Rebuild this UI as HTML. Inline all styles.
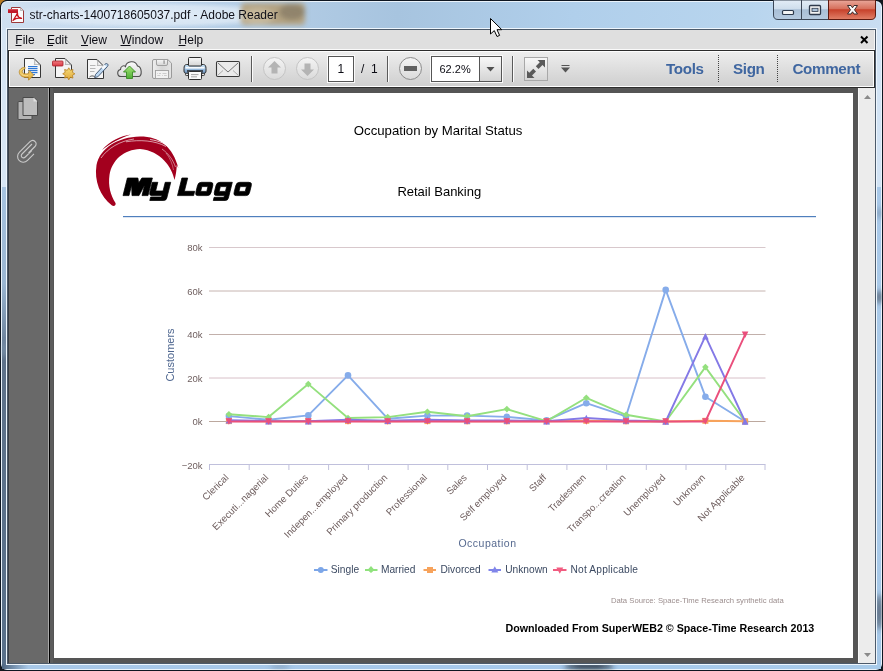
<!DOCTYPE html>
<html><head><meta charset="utf-8">
<style>
html,body{margin:0;padding:0;width:883px;height:671px;overflow:hidden;background:#b9d2ea;}
svg{display:block;position:absolute;left:0;top:0;}
text{font-family:"Liberation Sans",sans-serif;}
</style></head>
<body>
<svg width="883" height="671" viewBox="0 0 883 671">
<defs>
  <linearGradient id="glassH" x1="0" y1="0" x2="1" y2="0">
    <stop offset="0" stop-color="#cfe0f1"/>
    <stop offset="0.2" stop-color="#bcd3ea"/>
    <stop offset="0.45" stop-color="#a7c4df"/>
    <stop offset="0.65" stop-color="#b0cfeb"/>
    <stop offset="0.85" stop-color="#b8d5ee"/>
    <stop offset="1" stop-color="#c9ddf1"/>
  </linearGradient>
  <linearGradient id="frameL" x1="0" y1="0" x2="0" y2="1">
    <stop offset="0" stop-color="#a6c3e0"/>
    <stop offset="0.2" stop-color="#9ab6d2"/>
    <stop offset="0.36" stop-color="#5e728a"/>
    <stop offset="1" stop-color="#58708a"/>
  </linearGradient>
  <linearGradient id="frameR" x1="0" y1="0" x2="0" y2="1">
    <stop offset="0" stop-color="#a8c8e8"/>
    <stop offset="0.6" stop-color="#acccea"/>
    <stop offset="1" stop-color="#a4c6e6"/>
  </linearGradient>
  <linearGradient id="frameB" x1="0" y1="0" x2="1" y2="0">
    <stop offset="0" stop-color="#4d6580"/>
    <stop offset="0.03" stop-color="#a8c8e8"/>
    <stop offset="0.5" stop-color="#a6c8ea"/>
    <stop offset="1" stop-color="#a8cbea"/>
  </linearGradient>
  <linearGradient id="tb" x1="0" y1="0" x2="0" y2="1">
    <stop offset="0" stop-color="#ededed"/>
    <stop offset="1" stop-color="#cfcfcf"/>
  </linearGradient>
  <linearGradient id="btnBlue" x1="0" y1="0" x2="0" y2="1">
    <stop offset="0" stop-color="#e3edf7"/>
    <stop offset="0.45" stop-color="#cfdeec"/>
    <stop offset="0.5" stop-color="#a9bfd6"/>
    <stop offset="1" stop-color="#b6cadf"/>
  </linearGradient>
  <linearGradient id="btnRed" x1="0" y1="0" x2="0" y2="1">
    <stop offset="0" stop-color="#eaa99c"/>
    <stop offset="0.45" stop-color="#d6705c"/>
    <stop offset="0.5" stop-color="#c7412b"/>
    <stop offset="1" stop-color="#e2826a"/>
  </linearGradient>
  <radialGradient id="glow" cx="0.5" cy="0.5" r="0.5">
    <stop offset="0" stop-color="#e4eef8" stop-opacity="0.95"/>
    <stop offset="0.7" stop-color="#dde9f5" stop-opacity="0.8"/>
    <stop offset="1" stop-color="#dde9f5" stop-opacity="0"/>
  </radialGradient>
  <radialGradient id="blob" cx="0.5" cy="0.5" r="0.5">
    <stop offset="0" stop-color="#6f6a60" stop-opacity="0.9"/>
    <stop offset="0.35" stop-color="#9a8566" stop-opacity="0.85"/>
    <stop offset="0.75" stop-color="#b39f7c" stop-opacity="0.6"/>
    <stop offset="1" stop-color="#b39f7c" stop-opacity="0"/>
  </radialGradient>
  <linearGradient id="arrowY" x1="0" y1="0" x2="0" y2="1">
    <stop offset="0" stop-color="#f6dc7a"/>
    <stop offset="1" stop-color="#e0a83a"/>
  </linearGradient>
  <filter id="blur3" x="-50%" y="-50%" width="200%" height="200%"><feGaussianBlur stdDeviation="2.5"/></filter>
  <linearGradient id="redBar" x1="0" y1="0" x2="0" y2="1">
    <stop offset="0" stop-color="#f07a80"/>
    <stop offset="1" stop-color="#d83a44"/>
  </linearGradient>
  <linearGradient id="prnBlue" x1="0" y1="0" x2="0" y2="1">
    <stop offset="0" stop-color="#c4e0f4"/>
    <stop offset="0.6" stop-color="#94b8dc"/>
    <stop offset="1" stop-color="#6c90b8"/>
  </linearGradient>
  <linearGradient id="saveG" x1="0" y1="0" x2="1" y2="0">
    <stop offset="0" stop-color="#eeeeee"/>
    <stop offset="0.5" stop-color="#d6d6d6"/>
    <stop offset="1" stop-color="#e4e4e4"/>
  </linearGradient>
  <linearGradient id="cloudG" x1="0" y1="0" x2="0" y2="1">
    <stop offset="0" stop-color="#fbfbfb"/>
    <stop offset="1" stop-color="#d8d8d8"/>
  </linearGradient>
  <linearGradient id="greenG" x1="0" y1="0" x2="0" y2="1">
    <stop offset="0" stop-color="#a6e67a"/>
    <stop offset="1" stop-color="#4fae34"/>
  </linearGradient>
  <linearGradient id="btnGrad" x1="0" y1="0" x2="0" y2="1">
    <stop offset="0" stop-color="#f8f8f8"/>
    <stop offset="1" stop-color="#d4d4d4"/>
  </linearGradient>
  <linearGradient id="circGrad" x1="0" y1="0" x2="0" y2="1">
    <stop offset="0" stop-color="#f4f4f4"/>
    <stop offset="1" stop-color="#dadada"/>
  </linearGradient>
</defs>

<!-- ===== Window frame ===== -->
<rect x="0" y="0" width="883" height="671" fill="#14181e"/>
<path d="M0 0 H6 C4 1 2 3 0 6 Z" fill="#b87a22"/>
<rect x="0" y="0" width="883" height="671" rx="7" fill="#0e1621"/>
<rect x="1" y="1" width="881" height="669" rx="6" fill="#eaf3fb"/>
<rect x="2" y="2" width="879" height="667" rx="5" fill="url(#glassH)"/>
<rect x="2" y="30" width="5" height="157" fill="#d6e5f4"/>
<rect x="876" y="30" width="5" height="157" fill="#d2e3f4"/>
<rect x="2" y="187" width="5" height="482" fill="url(#frameL)"/>
<rect x="876" y="187" width="5" height="482" fill="url(#frameR)"/>
<rect x="2" y="664" width="879" height="5" fill="url(#frameB)"/>
<g filter="url(#blur3)">
  <ellipse cx="879" cy="213" rx="2" ry="6" fill="#6f88a2" opacity="0.8"/>
  <ellipse cx="879" cy="297" rx="2.2" ry="7" fill="#3c4654" opacity="0.9"/>
  <ellipse cx="879" cy="612" rx="2.2" ry="18" fill="#343c48" opacity="0.9"/>
  <ellipse cx="4" cy="350" rx="2" ry="8" fill="#8ea6c0" opacity="0.6"/>
  <ellipse cx="589" cy="666.5" rx="25" ry="2.6" fill="#1e2630" opacity="1"/>
  <ellipse cx="280" cy="666.5" rx="10" ry="1.8" fill="#6a8098" opacity="0.6"/>
</g>
<rect x="6" y="28" width="871" height="637" fill="#eef6fd"/>
<rect x="7" y="29" width="869" height="635" fill="#4c5a6a"/>
<!-- title glow -->
<ellipse cx="150" cy="15" rx="155" ry="13" fill="url(#glow)"/>
<g filter="url(#blur3)">
  <rect x="241" y="3" width="64" height="22" rx="4" fill="#b3a07c" opacity="0.95"/>
  <ellipse cx="292" cy="12" rx="13" ry="8" fill="#6e6656" opacity="0.5"/>
  <ellipse cx="258" cy="16" rx="16" ry="8" fill="#e8e0cc" opacity="0.35"/>
</g>
<!-- PDF icon -->
<g>
  <path d="M11.5 7.5 H20.5 L23.5 10.5 V22.5 H11.5 Z" fill="#fbfbfb" stroke="#9c3a3a" stroke-width="1"/>
  <path d="M20.5 7.5 V10.5 H23.5" fill="#ddd" stroke="#9c9c9c" stroke-width="0.6"/>
  <rect x="8" y="9" width="10" height="4" fill="#c11a2a"/>
  <rect x="8" y="9" width="10" height="1.2" fill="#d84a55"/>
  <path d="M13 20.5 C14.5 18 16.5 15.5 17.5 13 C17.2 15 17.8 16.5 19 17.3 C20 17.8 21 18 21.5 18.3 C19.5 18.2 17.5 18 15.5 18.6 C14.5 19.3 13.8 20 13 20.5 Z" fill="none" stroke="#c8141e" stroke-width="1.3" stroke-linejoin="round"/>
</g>
<text x="29.5" y="19.3" font-size="12" fill="#101018">str-charts-1400718605037.pdf - Adobe Reader</text>

<!-- Window buttons -->
<path d="M773.5 0 V15 Q773.5 19.5 778 19.5 H801.5 V0 Z" fill="url(#btnBlue)" stroke="#3b4656" stroke-width="1"/>
<rect x="801.5" y="0" width="27" height="19.5" fill="url(#btnBlue)" stroke="#3b4656" stroke-width="1"/>
<path d="M828.5 0 V19.5 H871 Q875.5 19.5 875.5 15 V0 Z" fill="url(#btnRed)" stroke="#5e1a10" stroke-width="1"/>
<rect x="782.5" y="10.5" width="11" height="4" rx="1" fill="#f4f4f4" stroke="#2e3a4c" stroke-width="1.2"/>
<rect x="809.5" y="5.5" width="11" height="9" rx="1" fill="#f4f4f4" stroke="#2e3a4c" stroke-width="1.3"/>
<rect x="812" y="8.3" width="6" height="3.2" fill="#a9c0d8" stroke="#2e3a4c" stroke-width="0.8"/>
<path d="M847.5 5.5 H851 L852.5 7.8 L854 5.5 H857.5 L854.5 9.8 L857.5 14 H854 L852.5 11.8 L851 14 H847.5 L850.5 9.8 Z" fill="#fafafa" stroke="#3b2a2a" stroke-width="1" stroke-linejoin="round"/>

<!-- ===== Client area ===== -->
<!-- menubar -->
<rect x="8" y="30" width="867" height="19" fill="#dfdfdf"/>
<rect x="8" y="49" width="866" height="1" fill="#fafafa"/>
<rect x="874" y="30" width="1" height="20" fill="#f4f4f4"/>
<g font-size="12" fill="#0c0c14">
  <text x="15.3" y="44">File</text>
  <text x="46.9" y="44">Edit</text>
  <text x="81.1" y="44">View</text>
  <text x="120.4" y="44">Window</text>
  <text x="178.6" y="44">Help</text>
</g>
<g fill="#0c0c14">
  <rect x="15.5" y="45" width="6" height="1"/>
  <rect x="47" y="45" width="6" height="1"/>
  <rect x="81" y="45" width="7" height="1"/>
  <rect x="120.5" y="45" width="10" height="1"/>
  <rect x="178.5" y="45" width="7" height="1"/>
</g>
<path d="M861 36.5 L867.5 43 M867.5 36.5 L861 43" stroke="#000" stroke-width="2"/>

<!-- toolbar -->
<rect x="8" y="50" width="867" height="38" fill="#2c2c2c"/>
<rect x="9" y="51" width="865" height="36" fill="#fdfdfd"/>
<rect x="10" y="52" width="863" height="34" fill="url(#tb)"/>
<!-- toolbar icons -->
<!-- open -->
<g>
  <path d="M24.5 58.5 H34 L40.5 65 V77.5 H24.5 Z" fill="#f8f8f8" stroke="#363636" stroke-width="1"/>
  <path d="M34 58.8 C35 61 35 63 34.3 64.5 C36.5 64 38.5 64.5 40.2 65.2" fill="none" stroke="#9a9a9a" stroke-width="0.8"/>
  <g fill="#2f78d6"><rect x="28" y="66" width="9.5" height="1.2"/><rect x="28" y="68" width="9.5" height="1.2"/><rect x="28" y="70" width="9.5" height="1.2"/><rect x="28" y="72" width="9.5" height="1.2"/><rect x="31" y="74" width="4" height="1.2"/></g>
  <path d="M25 67.3 C20.3 67.6 18.6 70.8 19.5 73.5 C20.6 76.8 24.5 77.8 28.3 77.3 L28.6 80.2 L33.6 75 L29 70.2 L28.7 73.6 C26.2 74.2 23.2 73.9 22.4 72.4 C21.7 70.9 22.8 69.2 25 68.7 Z" fill="url(#arrowY)" stroke="#b8862a" stroke-width="0.8" stroke-linejoin="round"/>
  <path d="M21 73.5 C22 75.5 25 76 28 75.6" fill="none" stroke="#fff3c0" stroke-width="0.7" opacity="0.8"/>
</g>
<!-- create pdf -->
<g>
  <path d="M55.5 58.5 H65 L71.5 65 V77.5 H55.5 Z" fill="#f5f5f5" stroke="#363636" stroke-width="1"/>
  <path d="M65 58.8 C66 61 66 63 65.3 64.5 C67.5 64 69.5 64.5 71.2 65.2" fill="none" stroke="#9a9a9a" stroke-width="0.8"/>
  <rect x="52.5" y="61" width="10.5" height="5" rx="0.8" fill="url(#redBar)" stroke="#a8202a" stroke-width="0.8"/>
  <path d="M68.8 67.8 L70.3 70.3 L73 69.5 L72.4 72.3 L74.9 73.8 L72.4 75.3 L73 78.1 L70.3 77.3 L68.8 79.8 L67.3 77.3 L64.6 78.1 L65.2 75.3 L62.7 73.8 L65.2 72.3 L64.6 69.5 L67.3 70.3 Z" fill="url(#arrowY)" stroke="#b88020" stroke-width="0.8" stroke-linejoin="round"/>
</g>
<!-- sign -->
<g>
  <path d="M87.5 59.5 H97 L103.5 66 V78.5 H87.5 Z" fill="#f6f6f6" stroke="#363636" stroke-width="1"/>
  <path d="M97 59.8 C98 62 98 64 97.3 65.5 C99.5 65 101.5 65.5 103.2 66.2" fill="none" stroke="#9a9a9a" stroke-width="0.8"/>
  <g fill="#b0b0b0"><rect x="90" y="65" width="5.5" height="0.9"/><rect x="90" y="68" width="5.5" height="0.9"/><rect x="90" y="71" width="4.5" height="0.9"/></g>
  <path d="M95.5 74.5 L105 64.2 C105.8 63.4 107 63.4 107.6 64 C108.2 64.6 108.2 65.8 107.4 66.6 L97.8 76.8 L94.6 77.6 Z" fill="#bcd8f2" stroke="#3a4e6a" stroke-width="0.9" stroke-linejoin="round"/>
  <path d="M101.2 67.2 L104.2 64.4 L106.3 66.5 L103.3 69.5 Z" fill="#ffffff" opacity="0.9"/>
  <path d="M89.5 77 C91 75.8 92.5 75.5 94.5 76.5" stroke="#333" stroke-width="0.8" fill="none"/>
</g>
<!-- cloud -->
<g>
  <path d="M121 76.5 C117 76.5 116.5 70.5 120.5 69.5 C120.5 66 124 65 125.5 66.5 C126.5 61 135.5 59.5 137.5 66 C142 66.5 142.5 76.5 138.5 76.5 Z" fill="url(#cloudG)" stroke="#4e4e4e" stroke-width="1.1"/>
  <path d="M129.5 66 L135.5 72 H132.5 V78.5 H126.5 V72 H123.5 Z" fill="url(#greenG)" stroke="#3b8a26" stroke-width="0.9" stroke-linejoin="round"/>
</g>
<!-- save (disabled) -->
<g>
  <path d="M154 59.5 H167.8 L171.5 63.2 V77 Q171.5 78.5 170 78.5 H154 Q152.5 78.5 152.5 77 V61 Q152.5 59.5 154 59.5 Z" fill="url(#saveG)" stroke="#9a9a9a" stroke-width="1"/>
  <path d="M156.5 59.5 H167.5 V64 Q167.5 65.5 166 65.5 H158 Q156.5 65.5 156.5 64 Z" fill="url(#btnGrad)" stroke="#9a9a9a" stroke-width="0.9"/>
  <rect x="163.3" y="60.3" width="1.6" height="3.6" fill="#a6a6a6"/>
  <rect x="155.5" y="70.5" width="13" height="8" fill="#f2f2f2" stroke="#a0a0a0" stroke-width="0.9"/>
  <g fill="#c4c4c4"><rect x="157.3" y="73" width="0.8" height="0.8"/><rect x="159" y="73" width="2" height="0.8"/><rect x="162.5" y="73" width="4" height="0.8"/><rect x="157.3" y="75.2" width="3" height="0.8"/><rect x="162" y="75.2" width="0.8" height="0.8"/><rect x="164" y="75.2" width="2.8" height="0.8"/></g>
</g>
<!-- print -->
<g>
  <rect x="185.5" y="72.5" width="4" height="3" rx="0.8" fill="#e6e6e6" stroke="#2e2e2e" stroke-width="0.9"/>
  <rect x="200.5" y="72.5" width="4" height="3" rx="0.8" fill="#e6e6e6" stroke="#2e2e2e" stroke-width="0.9"/>
  <path d="M186.5 64.5 H203.5 C205.3 64.5 206 66.3 206 68.5 V71 C206 72.6 205.2 73.3 203.8 73.3 H186.2 C184.8 73.3 184 72.6 184 71 V68.5 C184 66.3 184.7 64.5 186.5 64.5 Z" fill="url(#prnBlue)" stroke="#2e2e2e" stroke-width="1"/>
  <rect x="185.5" y="66.8" width="19" height="1.8" fill="#ffffff" opacity="0.9"/>
  <rect x="187" y="70" width="16" height="2.6" fill="#3e4a58"/>
  <rect x="188.5" y="57.5" width="13" height="8.5" rx="1" fill="url(#btnGrad)" stroke="#2e2e2e" stroke-width="1"/>
  <rect x="188.5" y="71.5" width="13" height="8" rx="1" fill="#f9f9f9" stroke="#2e2e2e" stroke-width="1"/>
  <rect x="191" y="74.2" width="7.5" height="0.9" fill="#9a9a9a"/><rect x="191" y="76.4" width="6" height="0.9" fill="#9a9a9a"/>
</g>
<!-- mail -->
<g>
  <rect x="216.5" y="61.5" width="23" height="15" rx="1.2" fill="#ebebeb" stroke="#3a3a3a" stroke-width="1.1"/>
  <path d="M218 63 L228 72 L238 63" fill="none" stroke="#6a6a6a" stroke-width="0.9"/>
  <path d="M218 75 L223 70.5 M238 75 L233 70.5" fill="none" stroke="#9a9a9a" stroke-width="0.8"/>
</g>
<!-- separator -->
<rect x="251" y="56" width="1" height="26" fill="#5a5a5a"/><rect x="252" y="56" width="1" height="26" fill="#fbfbfb"/>
<!-- up / down -->
<circle cx="274.5" cy="68.5" r="11" fill="url(#circGrad)" stroke="#c4c4c4" stroke-width="1"/>
<path d="M274.5 61 L281 67.5 H277.5 V73.5 H271.5 V67.5 H268 Z" fill="#b4b4b4"/>
<circle cx="307.5" cy="68.5" r="11" fill="url(#circGrad)" stroke="#c4c4c4" stroke-width="1"/>
<path d="M307.5 76 L314 69.5 H310.5 V63.5 H304.5 V69.5 H301 Z" fill="#b4b4b4"/>
<!-- page box -->
<rect x="327" y="55" width="28" height="28" fill="#fafafa"/>
<rect x="328.5" y="56.5" width="25" height="25" fill="#fff" stroke="#555" stroke-width="1"/>
<text x="337.5" y="72.5" font-size="12" fill="#0c0c14">1</text>
<text x="361" y="72.5" font-size="12" fill="#0c0c14">/</text><text x="371" y="72.5" font-size="12" fill="#0c0c14">1</text>
<rect x="387" y="56" width="1" height="26" fill="#5a5a5a"/><rect x="388" y="56" width="1" height="26" fill="#fbfbfb"/>
<!-- minus -->
<circle cx="410.5" cy="68.5" r="11" fill="url(#circGrad)" stroke="#8c8c8c" stroke-width="1"/>
<rect x="404" y="66" width="13" height="5" fill="#606060"/>
<!-- zoom box -->
<rect x="430" y="55" width="73" height="28" fill="#fafafa"/>
<rect x="431.5" y="56.5" width="70" height="25" fill="#fff" stroke="#555" stroke-width="1"/>
<rect x="480" y="57" width="21" height="24" fill="url(#btnGrad)"/>
<rect x="479" y="57" width="1" height="24" fill="#555"/>
<text x="439.5" y="72.5" font-size="11" fill="#0c0c14">62.2%</text>
<path d="M486.5 67 H494.5 L490.5 71.5 Z" fill="#505050"/>
<rect x="512" y="56" width="1" height="26" fill="#5a5a5a"/><rect x="513" y="56" width="1" height="26" fill="#fbfbfb"/>
<!-- fullscreen -->
<rect x="524.5" y="57.5" width="23" height="23" fill="url(#btnGrad)" stroke="#a8a8a8" stroke-width="1"/>
<path d="M537.5 60 H545 V67.5 L542.5 65 L538.5 69 L535.8 66.3 L539.8 62.3 Z" fill="#5a5a5a"/>
<path d="M527 70.5 V78 H534.5 L532 75.5 L536 71.5 L533.3 68.8 L529.3 72.8 Z" fill="#5a5a5a"/>
<!-- small dropdown -->
<rect x="561.5" y="65" width="8" height="1" fill="#555"/>
<path d="M561 67.5 H570 L565.5 72.5 Z" fill="#555"/>
<!-- Tools Sign Comment -->
<g font-size="15.2" font-weight="bold" fill="#3f66a0" letter-spacing="-0.35">
  <text x="666" y="74">Tools</text>
  <text x="733" y="74">Sign</text>
  <text x="792.5" y="74">Comment</text>
</g>
<line x1="718.5" y1="55" x2="718.5" y2="82" stroke="#444" stroke-width="1" stroke-dasharray="1 1"/>
<line x1="777.5" y1="55" x2="777.5" y2="82" stroke="#444" stroke-width="1" stroke-dasharray="1 1"/>

<!-- ===== Document area ===== -->
<rect x="8" y="88" width="867" height="575" fill="#555555"/>
<!-- left panel -->
<rect x="8" y="88" width="40" height="575" fill="#696969"/>
<rect x="8" y="88" width="1" height="575" fill="#3a3f46"/>
<rect x="48" y="88" width="1" height="575" fill="#a9a9a9"/>
<rect x="49" y="88" width="1" height="575" fill="#000"/>
<rect x="50" y="88" width="3" height="575" fill="#5c5c5c"/>
<!-- pages icon -->
<rect x="18" y="101.5" width="14" height="18" rx="1" fill="#b4b4b4" stroke="#4a4a4a" stroke-width="1"/>
<path d="M23 97.5 H34 L37.5 101 V115.5 H23 Z" fill="#bdbdbd" stroke="#4a4a4a" stroke-width="1"/>
<path d="M33.5 97.5 V101.5 H37.5 Z" fill="#e0e0e0"/>
<!-- paperclip -->
<path transform="translate(0 1)" d="M28.5 152 L35 145.5 C36.5 144 36.5 141.5 35 140.5 C33.5 139 31.5 139.2 30 140.7 L19.5 151.2 C17 153.7 17 157.5 19.3 159.7 C21.5 161.9 25 161.8 27.5 159.3 L34 152.8 M32 143 L22 153 C21 154 21 155.5 22 156.3 C23 157.2 24.3 157 25.3 156 L32 149.3" fill="none" stroke="#c9c9c9" stroke-width="1.1"/>

<!-- scrollbar -->
<rect x="858" y="88" width="17" height="575" fill="#ececec"/>
<rect x="858" y="88" width="1" height="575" fill="#f8f8f8"/>
<path d="M864 99 H871 L867.5 95 Z" fill="#8a8a8a"/>
<path d="M864 653 H871 L867.5 657 Z" fill="#8a8a8a"/>

<!-- ===== Page ===== -->
<rect x="54" y="93" width="799" height="565" fill="#ffffff"/>

<!-- Logo swoosh -->
<path d="M112 205.5 C100 196 94 181 96.5 165 C100 148 118 137 140 136.5 C160 136.5 173 147 178.5 168.5 L176.8 165 C176.5 171 175.8 175 174.5 180 C172 167 161 151 140 149 C124 149.5 112 160 109.5 175 C108 186 110.5 195 115.5 203 C116.3 205 114.3 206.8 112 205.5 Z" fill="#a3001e"/>
<path d="M102 150 C110 141 120 136 131 134.5 C121 137.5 111 143 102 150 Z" fill="#a3001e"/>
<path d="M101 158 C108 148 120 141 134 139" stroke="#fff" stroke-width="0.7" fill="none" opacity="0.85"/>
<path d="M126 141.8 C140 139.5 155 140.5 166 146.5" stroke="#fff" stroke-width="0.7" fill="none" opacity="0.85"/>
<path d="M150 139.5 C160 141 166 144 170 148" stroke="#fff" stroke-width="0.8" fill="none" opacity="0.9"/>
<path d="M162 149 C169 154 173 160 175.5 167" stroke="#fff" stroke-width="0.6" fill="none" opacity="0.85"/>
<path d="M166 153 C170 158 172.5 164 173.5 170" stroke="#fff" stroke-width="0.5" fill="none" opacity="0.7"/>
<g transform="matrix(1 0 -0.25 1 48.9 0)" fill="#000" fill-rule="evenodd" stroke="#000" stroke-width="0.7" stroke-linejoin="round">
<path d="M123 195.6 L123 178 L133.5 178 L135.5 183 L137.5 178 L148 178 L148 195.6 L142 195.6 L142 185 L139 195.6 L132 195.6 L129 185 L129 195.6 Z"/><path d="M149 182.3 H154.5 V191 H161.9 V182.3 H167.4 V198 Q167.4 200.5 165 200.5 H151 V197 H161.9 V195.6 H152 Q149 195.6 149 192.5 Z"/><path d="M177.5 178 H183.3 V191.3 H193.6 V195.6 H177.5 Z"/><path d="M198.2 182.3 H207.10000000000002 Q210.3 182.3 210.3 185.5 V192.4 Q210.3 195.6 207.10000000000002 195.6 H198.2 Q195 195.6 195 192.4 V185.5 Q195 182.3 198.2 182.3 Z M199.6 186.6 H205.7 V191.4 H199.6 Z"/><path d="M216.7 182.3 H229 V198 Q229 200.5 226.5 200.5 H214.5 V197.3 H224.4 V195.6 H216.7 Q213.5 195.6 213.5 192.4 V185.5 Q213.5 182.3 216.7 182.3 Z M218.1 186.6 H224.4 V191.4 H218.1 Z"/><path d="M236.5 182.3 H245.60000000000002 Q248.8 182.3 248.8 185.5 V192.4 Q248.8 195.6 245.60000000000002 195.6 H236.5 Q233.3 195.6 233.3 192.4 V185.5 Q233.3 182.3 236.5 182.3 Z M237.9 186.6 H244.2 V191.4 H237.9 Z"/>
</g>

<text x="353.8" y="134.5" font-size="13.2" fill="#000">Occupation by Marital Status</text>
<text x="397.4" y="195.7" font-size="13" fill="#000">Retail Banking</text>
<rect x="123" y="216" width="693" height="1.2" fill="#4f7fbd"/>

<!-- ===== Chart ===== -->
<g stroke-width="1" fill="none">
  <line x1="209" y1="247.5" x2="765.5" y2="247.5" stroke="#d8c8cc"/>
  <line x1="209" y1="291" x2="765.5" y2="291" stroke="#c6b4b0"/>
  <line x1="209" y1="334.5" x2="765.5" y2="334.5" stroke="#c2b0ab"/>
  <line x1="209" y1="378" x2="765.5" y2="378" stroke="#d8c0c8"/>
  <line x1="209" y1="421.5" x2="765.5" y2="421.5" stroke="#bca89e"/>
  <line x1="209" y1="464.5" x2="765.5" y2="464.5" stroke="#c0c0dc"/>
</g>
<g stroke="#c0c0dc" stroke-width="1">
  <line x1="209.5" y1="464.5" x2="209.5" y2="470"/>
  <line x1="249.2" y1="464.5" x2="249.2" y2="470"/>
  <line x1="288.9" y1="464.5" x2="288.9" y2="470"/>
  <line x1="328.6" y1="464.5" x2="328.6" y2="470"/>
  <line x1="368.4" y1="464.5" x2="368.4" y2="470"/>
  <line x1="408.1" y1="464.5" x2="408.1" y2="470"/>
  <line x1="447.8" y1="464.5" x2="447.8" y2="470"/>
  <line x1="487.5" y1="464.5" x2="487.5" y2="470"/>
  <line x1="527.2" y1="464.5" x2="527.2" y2="470"/>
  <line x1="566.9" y1="464.5" x2="566.9" y2="470"/>
  <line x1="606.6" y1="464.5" x2="606.6" y2="470"/>
  <line x1="646.3" y1="464.5" x2="646.3" y2="470"/>
  <line x1="686.0" y1="464.5" x2="686.0" y2="470"/>
  <line x1="725.8" y1="464.5" x2="725.8" y2="470"/>
  <line x1="765" y1="464.5" x2="765" y2="470"/>
</g>
<g font-size="9.5" fill="#6e5e5e" text-anchor="end">
  <text x="202.5" y="251.2">80k</text>
  <text x="202.5" y="294.7">60k</text>
  <text x="202.5" y="338.2">40k</text>
  <text x="202.5" y="381.7">20k</text>
  <text x="202.5" y="425.2">0k</text>
  <text x="202.5" y="468.7">−20k</text>
</g>
<text transform="translate(174 355) rotate(-90)" font-size="11" fill="#4f6790" text-anchor="middle">Customers</text>
<text x="487.5" y="547" font-size="10.5" fill="#56698f" text-anchor="middle" letter-spacing="0.5">Occupation</text>

<g font-size="9.7" fill="#6e5e5e" text-anchor="end" id="xl">
<text transform="translate(229.2 478.2) rotate(-45)">Clerical</text>
<text transform="translate(268.9 478.2) rotate(-45)">Executi...nagerial</text>
<text transform="translate(308.6 478.2) rotate(-45)">Home Duties</text>
<text transform="translate(348.3 478.2) rotate(-45)">Indepen...employed</text>
<text transform="translate(388.0 478.2) rotate(-45)">Primary production</text>
<text transform="translate(427.7 478.2) rotate(-45)">Professional</text>
<text transform="translate(467.4 478.2) rotate(-45)">Sales</text>
<text transform="translate(507.2 478.2) rotate(-45)">Self employed</text>
<text transform="translate(546.9 478.2) rotate(-45)">Staff</text>
<text transform="translate(586.6 478.2) rotate(-45)">Tradesmen</text>
<text transform="translate(626.3 478.2) rotate(-45)">Transpo...creation</text>
<text transform="translate(666.0 478.2) rotate(-45)">Unemployed</text>
<text transform="translate(705.7 478.2) rotate(-45)">Unknown</text>
<text transform="translate(745.4 478.2) rotate(-45)">Not Applicable</text>
</g>

<g id="series" fill="none" stroke-width="1.9" stroke-linejoin="round">
<polyline points="228.9,416.1 268.6,419.8 308.3,415.4 348.0,375.4 387.7,418.7 427.4,415.6 467.1,415.6 506.9,416.9 546.6,420.4 586.3,403.2 626.0,416.3 665.7,289.9 705.4,396.7 745.1,421.5" stroke="#86acea"/>
<g fill="#86acea" stroke="none"><circle cx="228.9" cy="416.1" r="3.3"/><circle cx="268.6" cy="419.8" r="3.3"/><circle cx="308.3" cy="415.4" r="3.3"/><circle cx="348.0" cy="375.4" r="3.3"/><circle cx="387.7" cy="418.7" r="3.3"/><circle cx="427.4" cy="415.6" r="3.3"/><circle cx="467.1" cy="415.6" r="3.3"/><circle cx="506.9" cy="416.9" r="3.3"/><circle cx="546.6" cy="420.4" r="3.3"/><circle cx="586.3" cy="403.2" r="3.3"/><circle cx="626.0" cy="416.3" r="3.3"/><circle cx="665.7" cy="289.9" r="3.3"/><circle cx="705.4" cy="396.7" r="3.3"/><circle cx="745.1" cy="421.5" r="3.3"/></g>
<polyline points="228.9,414.3 268.6,417.1 308.3,384.1 348.0,418.0 387.7,417.1 427.4,411.7 467.1,416.3 506.9,409.1 546.6,421.1 586.3,397.8 626.0,414.8 665.7,421.5 705.4,367.1 745.1,421.5" stroke="#94e07e"/>
<g fill="#94e07e" stroke="none"><path d="M228.9 411.0 L232.2 414.3 L228.9 417.6 L225.6 414.3 Z"/><path d="M268.6 413.8 L271.9 417.1 L268.6 420.4 L265.3 417.1 Z"/><path d="M308.3 380.8 L311.6 384.1 L308.3 387.4 L305.0 384.1 Z"/><path d="M348.0 414.7 L351.3 418.0 L348.0 421.3 L344.7 418.0 Z"/><path d="M387.7 413.8 L391.0 417.1 L387.7 420.4 L384.4 417.1 Z"/><path d="M427.4 408.4 L430.7 411.7 L427.4 415.0 L424.1 411.7 Z"/><path d="M467.1 413.0 L470.4 416.3 L467.1 419.6 L463.8 416.3 Z"/><path d="M506.9 405.8 L510.2 409.1 L506.9 412.4 L503.6 409.1 Z"/><path d="M546.6 417.8 L549.9 421.1 L546.6 424.4 L543.3 421.1 Z"/><path d="M586.3 394.5 L589.6 397.8 L586.3 401.1 L583.0 397.8 Z"/><path d="M626.0 411.5 L629.3 414.8 L626.0 418.1 L622.7 414.8 Z"/><path d="M665.7 418.2 L669.0 421.5 L665.7 424.8 L662.4 421.5 Z"/><path d="M705.4 363.8 L708.7 367.1 L705.4 370.4 L702.1 367.1 Z"/><path d="M745.1 418.2 L748.4 421.5 L745.1 424.8 L741.8 421.5 Z"/></g>
<polyline points="228.9,421.1 268.6,421.3 308.3,421.3 348.0,421.1 387.7,421.3 427.4,421.1 467.1,421.3 506.9,421.3 546.6,421.3 586.3,420.8 626.0,421.3 665.7,421.5 705.4,420.8 745.1,421.3" stroke="#f7a35c"/>
<g fill="#f7a35c" stroke="none"><rect x="225.9" y="418.1" width="6" height="6"/><rect x="265.6" y="418.3" width="6" height="6"/><rect x="305.3" y="418.3" width="6" height="6"/><rect x="345.0" y="418.1" width="6" height="6"/><rect x="384.7" y="418.3" width="6" height="6"/><rect x="424.4" y="418.1" width="6" height="6"/><rect x="464.1" y="418.3" width="6" height="6"/><rect x="503.9" y="418.3" width="6" height="6"/><rect x="543.6" y="418.3" width="6" height="6"/><rect x="583.3" y="417.8" width="6" height="6"/><rect x="623.0" y="418.3" width="6" height="6"/><rect x="662.7" y="418.5" width="6" height="6"/><rect x="702.4" y="417.8" width="6" height="6"/><rect x="742.1" y="418.3" width="6" height="6"/></g>
<polyline points="228.9,420.2 268.6,421.1 308.3,421.1 348.0,419.8 387.7,420.8 427.4,419.8 467.1,420.4 506.9,420.4 546.6,421.1 586.3,418.0 626.0,420.4 665.7,421.5 705.4,336.2 745.1,421.5" stroke="#8479e6"/>
<g fill="#8479e6" stroke="none"><path d="M228.9 416.9 L232.2 423.5 L225.6 423.5 Z"/><path d="M268.6 417.8 L271.9 424.4 L265.3 424.4 Z"/><path d="M308.3 417.8 L311.6 424.4 L305.0 424.4 Z"/><path d="M348.0 416.5 L351.3 423.1 L344.7 423.1 Z"/><path d="M387.7 417.5 L391.0 424.1 L384.4 424.1 Z"/><path d="M427.4 416.5 L430.7 423.1 L424.1 423.1 Z"/><path d="M467.1 417.1 L470.4 423.7 L463.8 423.7 Z"/><path d="M506.9 417.1 L510.2 423.7 L503.6 423.7 Z"/><path d="M546.6 417.8 L549.9 424.4 L543.3 424.4 Z"/><path d="M586.3 414.7 L589.6 421.3 L583.0 421.3 Z"/><path d="M626.0 417.1 L629.3 423.7 L622.7 423.7 Z"/><path d="M665.7 418.2 L669.0 424.8 L662.4 424.8 Z"/><path d="M705.4 332.9 L708.7 339.5 L702.1 339.5 Z"/><path d="M745.1 418.2 L748.4 424.8 L741.8 424.8 Z"/></g>
<polyline points="228.9,421.5 268.6,421.5 308.3,421.5 348.0,421.5 387.7,421.5 427.4,421.5 467.1,421.5 506.9,421.5 546.6,421.5 586.3,421.5 626.0,421.5 665.7,421.5 705.4,421.5 745.1,334.7" stroke="#ea4f7c"/>
<g fill="#ea4f7c" stroke="none"><path d="M228.9 424.8 L232.2 418.2 L225.6 418.2 Z"/><path d="M268.6 424.8 L271.9 418.2 L265.3 418.2 Z"/><path d="M308.3 424.8 L311.6 418.2 L305.0 418.2 Z"/><path d="M348.0 424.8 L351.3 418.2 L344.7 418.2 Z"/><path d="M387.7 424.8 L391.0 418.2 L384.4 418.2 Z"/><path d="M427.4 424.8 L430.7 418.2 L424.1 418.2 Z"/><path d="M467.1 424.8 L470.4 418.2 L463.8 418.2 Z"/><path d="M506.9 424.8 L510.2 418.2 L503.6 418.2 Z"/><path d="M546.6 424.8 L549.9 418.2 L543.3 418.2 Z"/><path d="M586.3 424.8 L589.6 418.2 L583.0 418.2 Z"/><path d="M626.0 424.8 L629.3 418.2 L622.7 418.2 Z"/><path d="M665.7 424.8 L669.0 418.2 L662.4 418.2 Z"/><path d="M705.4 424.8 L708.7 418.2 L702.1 418.2 Z"/><path d="M745.1 338.0 L748.4 331.4 L741.8 331.4 Z"/></g>
</g>

<!-- legend -->
<g>
  <line x1="314" y1="570" x2="327.5" y2="570" stroke="#7ca6e8" stroke-width="2"/>
  <circle cx="320.8" cy="570" r="3" fill="#7ca6e8"/>
  <line x1="365" y1="570" x2="377.5" y2="570" stroke="#90e27d" stroke-width="2"/>
  <path d="M371 566 L374.5 570 L371 573 L367.5 570 Z" fill="#90e27d"/>
  <line x1="423.5" y1="570" x2="436" y2="570" stroke="#f7a35c" stroke-width="2"/>
  <rect x="427" y="567" width="6" height="6" fill="#f7a35c"/>
  <line x1="488.5" y1="570" x2="501" y2="570" stroke="#8085e9" stroke-width="2"/>
  <path d="M494.8 566.3 L498.3 572.5 H491.3 Z" fill="#8085e9"/>
  <line x1="553" y1="570" x2="566.5" y2="570" stroke="#f15c80" stroke-width="2"/>
  <path d="M559.8 573.7 L563.3 567.5 H556.3 Z" fill="#f15c80"/>
</g>
<g font-size="10.2" fill="#3c4a62">
  <text x="330.8" y="573.3">Single</text>
  <text x="380.9" y="573.3">Married</text>
  <text x="440.5" y="573.3">Divorced</text>
  <text x="505.2" y="573.3">Unknown</text>
  <text x="570.5" y="573.3" textLength="67.5" lengthAdjust="spacing">Not Applicable</text>
</g>
<text x="610.9" y="602.5" font-size="7.7" fill="#9c8e8e">Data Source: Space-Time Research synthetic data</text>
<text x="505.5" y="632" font-size="10.7" font-weight="bold" fill="#000">Downloaded From SuperWEB2 © Space-Time Research 2013</text>
<!-- mouse cursor -->
<path d="M490.5 18.5 V34 L494.3 30.6 L497 36.5 L499.6 35.4 L497 29.7 H501.8 Z" fill="#ffffff" stroke="#000" stroke-width="1" stroke-linejoin="miter"/>
</svg>
</body></html>
